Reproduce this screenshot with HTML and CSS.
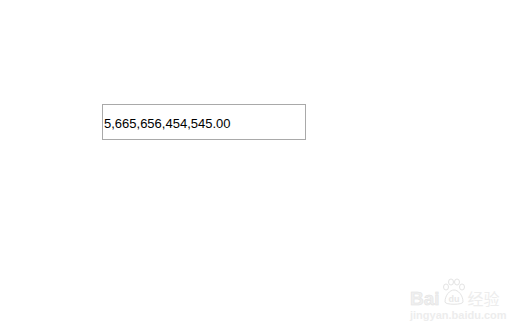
FILE: index.html
```html
<!DOCTYPE html>
<html>
<head>
<meta charset="utf-8">
<link rel="stylesheet" href="styles.css">
</head>
<body>
<div class="page">
  <input class="num" type="text" value="5,665,656,454,545.00">
</div>
<div class="watermark">
  <div class="wm-top">
    <span class="wm-bai">Bai</span>
    <span class="wm-paw">
      <svg width="26" height="28" viewBox="0 0 26 28">
        <g fill="none" stroke="#e4e4e4" stroke-width="1">
          <ellipse cx="5" cy="9" rx="2.5" ry="3"/>
          <ellipse cx="10" cy="4" rx="2.5" ry="3"/>
          <ellipse cx="16" cy="4" rx="2.5" ry="3"/>
          <ellipse cx="21" cy="9" rx="2.5" ry="3"/>
          <path d="M4 24 C4 17 9 12 13 12 C17 12 22 17 22 24 C22 27 4 27 4 24 Z"/>
        </g>
        <text x="13" y="24" text-anchor="middle" font-family="Liberation Sans, sans-serif" font-size="9" font-weight="bold" fill="#e8e8e8">du</text>
      </svg>
    </span>
    <span class="wm-cn">经验</span>
  </div>
  <div class="wm-url">jingyan.baidu.com</div>
</div>
</body>
</html>
```
FILE: styles.css
```css
html, body {
  margin: 0;
  padding: 0;
  background: #fff;
}
.page {
  padding: 104px 0 0 102px;
}
.num {
  display: block;
  box-sizing: border-box;
  width: 204px;
  height: 36px;
  margin: 0;
  border: 1px solid #a9a9a9;
  padding: 2px 0 0 1px;
  font-family: "Liberation Sans", Arial, sans-serif;
  font-size: 13px;
  color: #000;
  background: #fff;
  outline: none;
}
.watermark {
  position: absolute;
  left: 410px;
  top: 279px;
  width: 100px;
  color: #eeeeee;
  font-family: "Liberation Sans", Arial, "Noto Sans CJK SC", sans-serif;
}
.wm-top {
  display: flex;
  align-items: flex-end;
  height: 27px;
}
.wm-bai {
  font-size: 19px;
  font-weight: bold;
  line-height: 15px;
  color: #f0f0f0;
  -webkit-text-stroke: 0.5px #e2e2e2;
}
.wm-paw {
  display: flex;
  margin-left: 1px;
}
.wm-cn {
  font-family: "Noto Sans CJK SC", sans-serif;
  font-size: 16px;
  line-height: 16px;
  margin-left: 1px;
  color: #ededed;
}
.wm-url {
  font-size: 11px;
  line-height: 12px;
  margin-top: 3px;
  color: #ededed;
  font-weight: bold;
}
```
